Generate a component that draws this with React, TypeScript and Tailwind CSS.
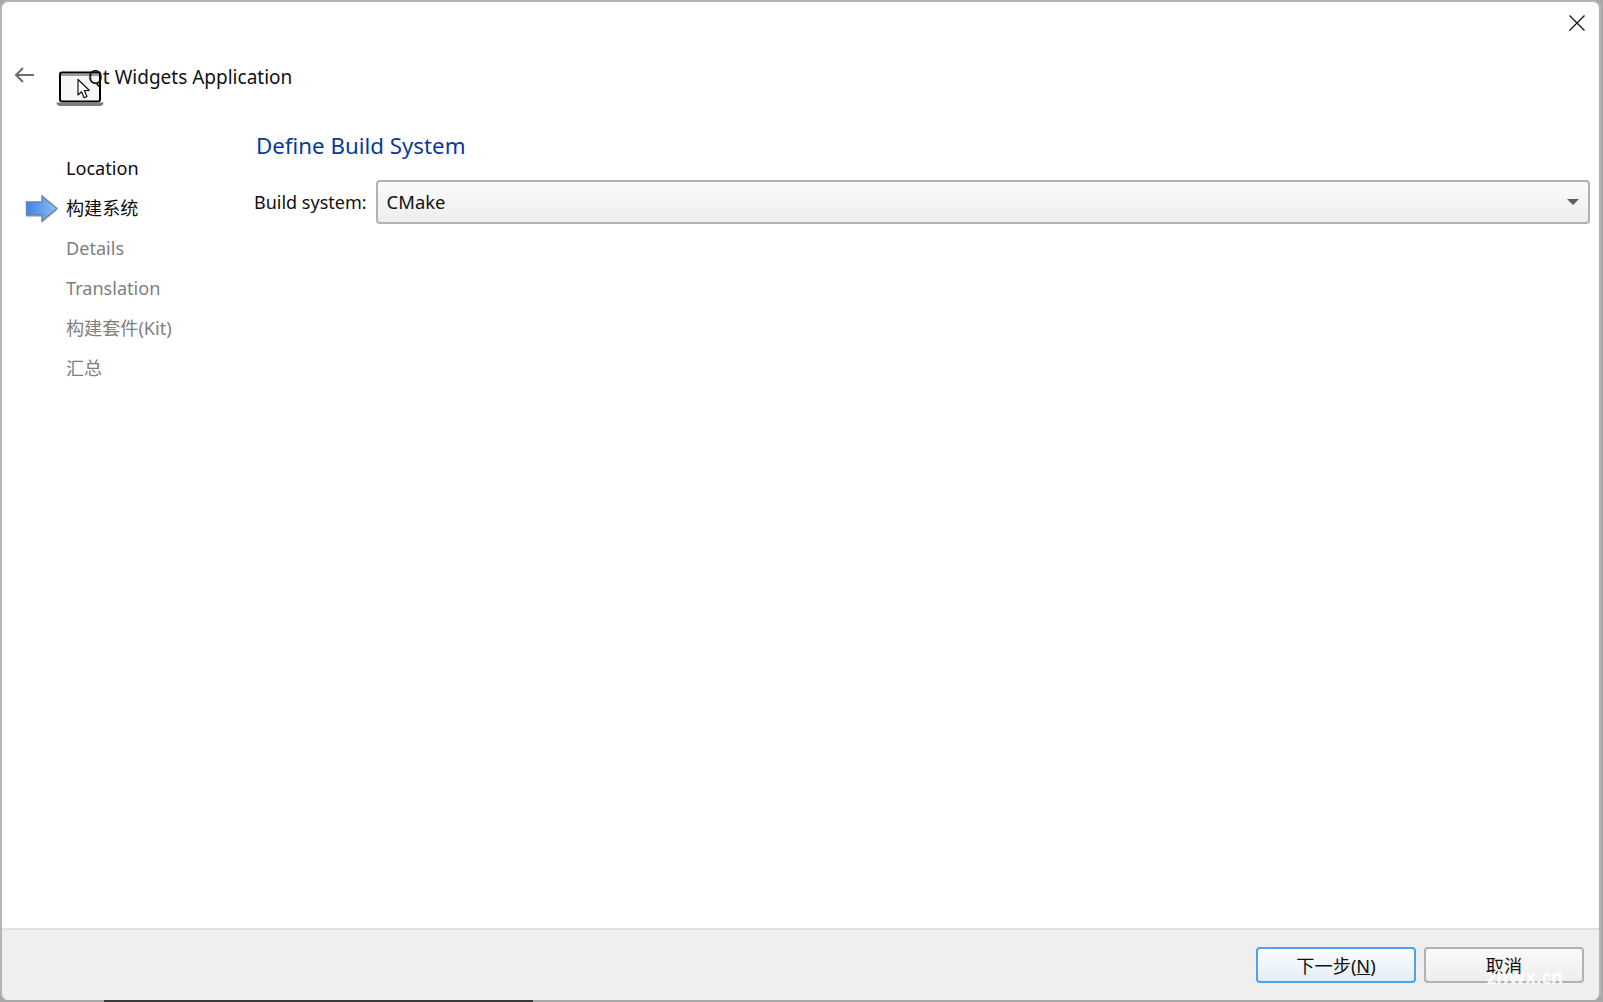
const font = "font-['Noto_Sans','Noto_Sans_CJK_SC',sans-serif]";

const steps = [
    { label: "Location", active: true },
    { label: "构建系统", active: true, current: true },
    { label: "Details" },
    { label: "Translation" },
    { label: "构建套件(Kit)" },
    { label: "汇总" },
];

function LaptopIcon() {
    return (
        <svg width="48" height="36" viewBox="0 0 48 36">
            <rect x="4" y="1.5" width="40" height="29" rx="2" fill="#f7f7f7" stroke="#000" strokeWidth="2" />
            <rect x="5" y="3" width="38" height="2" fill="#9a9a9a" />
            <path d="M0.5 31.5h47c0 2-1.5 3.5-3.5 3.5H4c-2 0-3.5-1.5-3.5-3.5z" fill="#7d7d7d" />
            <path d="M22 8.5v15.5l3.6-3.2 2.5 6 2.9-1.3-2.6-5.8 4.8-.4z" fill="#fff" stroke="#111" strokeWidth="1.2" strokeLinejoin="round" />
        </svg>
    );
}

function StepArrow() {
    return (
        <svg width="34" height="32" viewBox="0 0 34 32">
            <defs>
                <linearGradient id="arrowFill" x1="0" y1="0" x2="1" y2="0">
                    <stop offset="0" stopColor="#3f86e6" />
                    <stop offset="0.6" stopColor="#6ca6ec" />
                    <stop offset="1" stopColor="#9cc0e8" />
                </linearGradient>
            </defs>
            <path d="M1.5 9H17V3l15 12.5L17 28v-6H1.5z" fill="#555" opacity="0.35" transform="translate(0 2)" />
            <path d="M1.5 9H17V3l15 12.5L17 28v-6H1.5z" fill="url(#arrowFill)" stroke="#5f85b0" strokeWidth="1.4" />
        </svg>
    );
}

export default function App() {
    return (
        <div className={`${font} w-[1603px] h-[1002px] overflow-hidden bg-[#a8a8a8] relative`}>
            <div className="h-[1000px] w-[1601px] flex flex-col bg-white rounded-[8px] border-t-2 border-l-2 border-r-2 border-[#b4b4b4] overflow-hidden">
                <div className="h-[58px] flex justify-end">
                    <svg width="16" height="16" viewBox="0 0 16 16" className="mt-[13px] mr-[14px]" stroke="#111" strokeWidth="1.3" fill="none">
                        <path d="M0.5 0.5l15 15M15.5 0.5l-15 15" />
                    </svg>
                </div>
                <div className="h-[50px] flex items-start">
                    <svg width="20" height="16" viewBox="0 0 20 16" className="ml-[12px] mt-[7px]" stroke="#6e6e6e" strokeWidth="2" fill="none">
                        <path d="M20 8H2M9 1L2 8l7 7" />
                    </svg>
                    <div className="ml-[22px] mt-[11px] shrink-0">
                        <LaptopIcon />
                    </div>
                    <div className="ml-[-16px] mt-[4px] text-[19px] leading-[26px] text-[#111] relative">Qt Widgets Application</div>
                </div>
                <div className="flex flex-1 min-h-0">
                    <div className="w-[254px] shrink-0 pt-[39px] pl-[23px]">
                        {steps.map((s) => (
                            <div key={s.label} className="h-[40px] flex items-center">
                                <div className="w-[41px] shrink-0">{s.current && <StepArrow />}</div>
                                <span className={`text-[18.1px] ${s.active ? "text-[#0c0c0c]" : "text-[#7f7f7f]"}`}>{s.label}</span>
                            </div>
                        ))}
                    </div>
                    <div className="flex-1 pr-[9px]">
                        <div className="text-[22.3px] leading-[32px] text-[#0a3a94] mt-[20px]">Define Build System</div>
                        <div className="flex items-center mt-[18px]">
                            <span className="ml-[-2px] text-[18px] text-[#111] mr-[9px]">Build system:</span>
                            <div className="flex-1 h-[44px] rounded-[4px] border-2 border-[#b2b2b2] bg-gradient-to-b from-[#fbfbfb] to-[#ededed] flex items-center justify-between pl-[9px] pr-[9px] text-[18.4px] text-[#111]">
                                <span>CMake</span>
                                <span className="w-0 h-0 border-l-[6px] border-r-[6px] border-t-[6px] border-l-transparent border-r-transparent border-t-[#5c5c5c]" />
                            </div>
                        </div>
                    </div>
                </div>
                <div className="h-[72px] shrink-0 bg-[#efefef] border-t-2 border-[#e2e2e2] flex items-start justify-end gap-[8px] pt-[17px] pr-[15px]">
                    <button className="w-[160px] h-[36px] rounded-[4px] border-2 border-[#4da3ea] bg-gradient-to-b from-[#fbfdff] to-[#e4edf5] text-[18.2px] leading-[34px] text-[#111]">
                        下一步(<span className="underline">N</span>)
                    </button>
                    <button className="w-[160px] h-[36px] rounded-[4px] border-2 border-[#b2b2b2] bg-gradient-to-b from-[#fbfbfb] to-[#ededed] text-[18.2px] leading-[34px] text-[#111]">
                        取消
                    </button>
                </div>
            </div>
            <div className="absolute left-[104px] right-[1070px] bottom-0 h-[2px] bg-[#3a3a3a]" />
            <div className="absolute left-[1487px] top-[963px] text-[19px] font-bold text-white/85">zhwx.cn</div>
        </div>
    );
}
